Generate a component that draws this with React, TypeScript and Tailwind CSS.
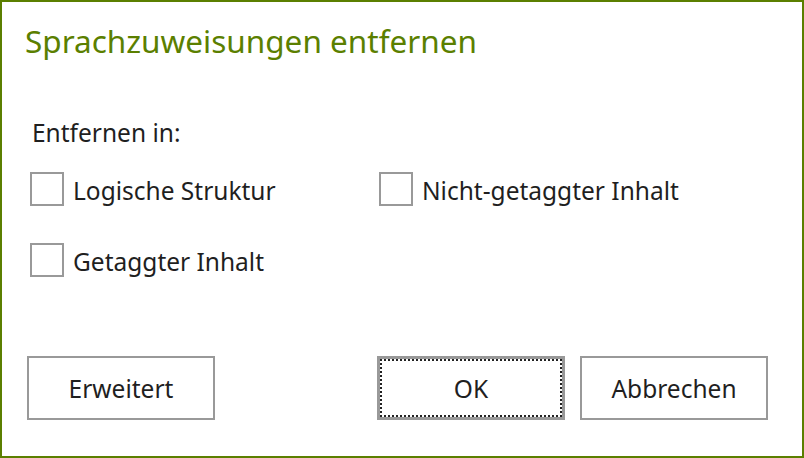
function Checkbox({ label }: { label: string }) {
  return (
    <label className="flex h-[34px] items-center gap-[9px]">
      <span className="block h-[34px] w-[34px] border-2 border-[#999999] bg-white" />
      <span className="pt-[4px] text-[24.5px] leading-[30px] text-[#1f1f1f]">{label}</span>
    </label>
  );
}

function DialogButton({ label, focused = false }: { label: string; focused?: boolean }) {
  return (
    <button
      type="button"
      className={
        focused
          ? "flex h-[64px] w-[188px] items-center justify-center border-[3px] border-[#999999] bg-white text-[24.5px] text-[#1f1f1f]"
          : "flex h-[64px] w-[188px] items-center justify-center border-2 border-[#999999] bg-white text-[24.5px] text-[#1f1f1f]"
      }
    >
      <span
        className={
          focused
            ? "flex h-full w-full items-center justify-center border-2 border-dotted border-[#222222] pt-[3px]"
            : "flex h-full w-full items-center justify-center pt-[3px]"
        }
      >
        {label}
      </span>
    </button>
  );
}

export default function App() {
  return (
    <div
      className="h-[458px] w-[804px] border-2 border-[#5b7f00] bg-white"
      style={{ fontFamily: '"Noto Sans", "Open Sans", sans-serif' }}
    >
      <h1 className="pl-[23px] pt-[20px] text-[31.5px] leading-[38px] text-[#5b7f00]">
        Sprachzuweisungen entfernen
      </h1>
      <div className="mt-[58px] pl-[30px] text-[24.5px] leading-[30px] text-[#1f1f1f]">Entfernen in:</div>
      <div className="mt-[24px] grid grid-cols-[349px_1fr] gap-y-[37px] pl-[28px]">
        <Checkbox label="Logische Struktur" />
        <Checkbox label="Nicht-getaggter Inhalt" />
        <Checkbox label="Getaggter Inhalt" />
      </div>
      <div className="mt-[79px] flex items-center pl-[25px]">
        <DialogButton label="Erweitert" />
        <div className="ml-[162px] flex gap-[15px]">
          <DialogButton label="OK" focused />
          <DialogButton label="Abbrechen" />
        </div>
      </div>
    </div>
  );
}
